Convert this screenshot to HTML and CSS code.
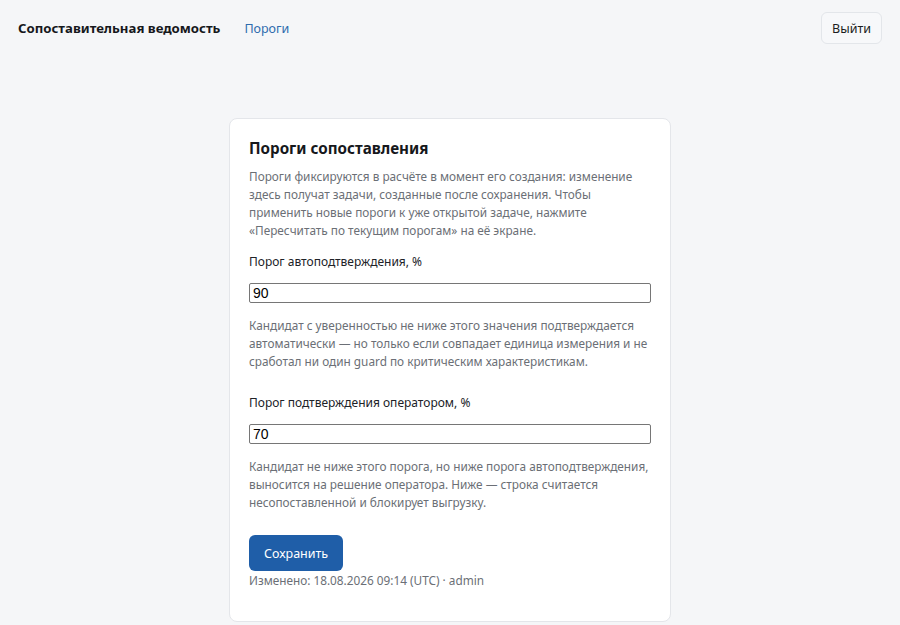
FILE: index.html
```html
<!DOCTYPE html>
<html lang="ru">
<head>
<meta charset="utf-8">
<title>Пороги сопоставления</title>
<link rel="stylesheet" href="styles.css">
</head>
<body>
<header class="topbar">
  <div class="brand">Сопоставительная ведомость</div>
  <nav class="nav"><a class="nav-link" href="#">Пороги</a></nav>
  <button class="logout" type="button">Выйти</button>
</header>
<main class="main">
  <section class="card">
    <h2 class="card-title">Пороги сопоставления</h2>
    <p class="muted intro">Пороги фиксируются в расчёте в момент его создания: изменение здесь получат задачи, созданные после сохранения. Чтобы применить новые пороги к уже открытой задаче, нажмите «Пересчитать по текущим порогам» на её экране.</p>
    <div class="field">
      <label class="field-label" for="auto">Порог автоподтверждения, %</label>
      <input class="field-input" id="auto" type="text" value="90">
      <p class="muted hint">Кандидат с уверенностью не ниже этого значения подтверждается автоматически — но только если совпадает единица измерения и не сработал ни один guard по критическим характеристикам.</p>
    </div>
    <div class="field">
      <label class="field-label" for="op">Порог подтверждения оператором, %</label>
      <input class="field-input" id="op" type="text" value="70">
      <p class="muted hint">Кандидат не ниже этого порога, но ниже порога автоподтверждения, выносится на решение оператора. Ниже — строка считается несопоставленной и блокирует выгрузку.</p>
    </div>
    <button class="save" type="button">Сохранить</button>
    <div class="muted status">Изменено: 18.08.2026 09:14 (UTC) · admin</div>
  </section>
  <section class="card card-next"></section>
</main>
</body>
</html>
```

FILE: styles.css
```css
* { box-sizing: border-box; }
html, body { height: 100%; }
body {
  margin: 0;
  background: #f5f6f8;
  font-family: "Noto Sans", "Open Sans", sans-serif;
  color: #1b1d21;
  font-size: 11.8px;
  overflow: hidden;
}
.topbar {
  display: flex;
  align-items: center;
  height: 56px;
  padding: 0 18px;
}
.brand {
  font-weight: 700;
  font-size: 13.2px;
  color: #16181c;
}
.nav { margin-left: 24px; flex: 1; }
.nav-link {
  color: #2f6cae;
  text-decoration: none;
  font-size: 12.5px;
}
.logout {
  height: 32px;
  padding: 0 10px;
  border: 1px solid #e3e6ea;
  border-radius: 6px;
  background: #f7f8fa;
  font-family: inherit;
  font-size: 12.5px;
  color: #1b1d21;
}
.main {
  width: 442px;
  margin: 62px auto 0;
}
.card {
  background: #fff;
  border: 1px solid #e4e6ea;
  border-radius: 8px;
  padding: 19px 19px 32px;
}
.card-next { margin-top: 3px; height: 40px; }
.card-title {
  margin: 0 0 9px;
  font-size: 15.2px;
  line-height: 20px;
  font-weight: 700;
  color: #16181c;
}
.muted { color: #6b6f76; }
p { margin: 0; }
.intro { line-height: 18px; margin-bottom: 14px; }
.field { display: flex; flex-direction: column; margin-bottom: 24px; }
.field-label {
  line-height: 18px;
  margin-bottom: 12px;
  color: #202227;
  font-size: 12px;
}
.field-input {
  height: 20px;
  border: 1px solid #767676;
  border-radius: 2px;
  padding: 1px 3px;
  font-family: "Liberation Sans", Arial, sans-serif;
  font-size: 14px;
  color: #000;
}
.hint { line-height: 18px; margin-top: 13px; }
.save {
  display: block;
  height: 36px;
  padding: 0 15px;
  border: none;
  border-radius: 6px;
  background: #1f5ea8;
  color: #fff;
  font-family: inherit;
  font-size: 12.5px;
}
.status { line-height: 18px; font-size: 11.8px; }
```
